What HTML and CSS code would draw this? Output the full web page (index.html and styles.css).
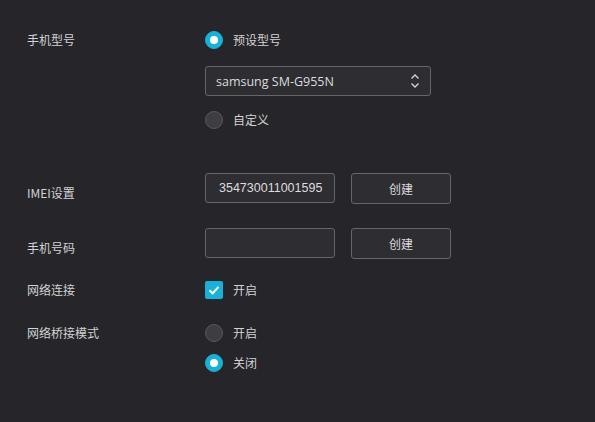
FILE: index.html
```html
<!DOCTYPE html>
<html lang="zh-CN">
<head>
<meta charset="utf-8">
<title>设置</title>
<link rel="stylesheet" href="styles.css">
</head>
<body>
<div class="page">
  <div class="row row-model">
    <div class="label">手机型号</div>
    <div class="field stack">
      <div class="option">
        <span class="radio checked"></span><span class="opt-text">预设型号</span>
      </div>
      <div class="select">
        <span class="select-text">samsung SM-G955N</span>
        <svg class="select-arrows" width="10" height="16" viewBox="0 0 10 16">
          <path d="M1.5 5.5 L5 2 L8.5 5.5" fill="none" stroke="#d8d8da" stroke-width="1.3"/>
          <path d="M1.5 10.5 L5 14 L8.5 10.5" fill="none" stroke="#d8d8da" stroke-width="1.3"/>
        </svg>
      </div>
      <div class="option option-after-select">
        <span class="radio"></span><span class="opt-text">自定义</span>
      </div>
    </div>
  </div>

  <div class="row row-imei">
    <div class="label label-input">IMEI设置</div>
    <div class="field inline">
      <div class="input"><span class="input-text">354730011001595</span></div>
      <div class="button">创建</div>
    </div>
  </div>

  <div class="row row-phone">
    <div class="label label-input">手机号码</div>
    <div class="field inline">
      <div class="input"></div>
      <div class="button">创建</div>
    </div>
  </div>

  <div class="row row-network">
    <div class="label">网络连接</div>
    <div class="field">
      <div class="option">
        <span class="checkbox">
          <svg width="18" height="18" viewBox="0 0 18 18">
            <path d="M4.5 9.2 L7.7 12.2 L13.5 5.8" fill="none" stroke="#ffffff" stroke-width="2"/>
          </svg>
        </span><span class="opt-text">开启</span>
      </div>
    </div>
  </div>

  <div class="row row-bridge">
    <div class="label">网络桥接模式</div>
    <div class="field stack">
      <div class="option">
        <span class="radio"></span><span class="opt-text">开启</span>
      </div>
      <div class="option option-second">
        <span class="radio checked"></span><span class="opt-text">关闭</span>
      </div>
    </div>
  </div>
</div>
</body>
</html>
```

FILE: styles.css
```css
html, body {
  margin: 0;
  padding: 0;
  background: #262529;
}

body {
  width: 595px;
  height: 422px;
  overflow: hidden;
  font-family: "Noto Sans CJK SC", "Open Sans", sans-serif;
  font-size: 12px;
  color: #d2d2d4;
}

.page {
  padding: 30px 0 0 27px;
}

.row {
  display: grid;
  grid-template-columns: 178px 1fr;
}

.label {
  line-height: 20px;
  height: 20px;
  white-space: nowrap;
}

.label-input {
  padding-top: 10px;
}

.stack {
  display: flex;
  flex-direction: column;
}

.inline {
  display: flex;
  gap: 16px;
}

.option {
  display: flex;
  align-items: center;
  height: 20px;
}

.opt-text {
  margin-left: 10px;
  line-height: 20px;
}

.radio {
  box-sizing: border-box;
  width: 18px;
  height: 18px;
  border-radius: 50%;
  background: #3e3d42;
  border: 1px solid #58575c;
  position: relative;
  flex: none;
}

.radio.checked {
  background: #1ab1d8;
  border-color: #1ab1d8;
}

.radio.checked::after {
  content: "";
  position: absolute;
  left: 4px;
  top: 4px;
  width: 8px;
  height: 8px;
  border-radius: 50%;
  background: #ffffff;
}

.checkbox {
  width: 18px;
  height: 18px;
  border-radius: 2px;
  background: #1ab1d8;
  flex: none;
  display: block;
}

.checkbox svg {
  display: block;
}

.select {
  box-sizing: border-box;
  margin-top: 16px;
  width: 226px;
  height: 30px;
  border: 1px solid #66656a;
  border-radius: 3px;
  background: #2e2d32;
  display: flex;
  align-items: center;
  justify-content: space-between;
  padding: 0 10px 0 10px;
}

.select-text {
  font-family: "Open Sans", "Noto Sans CJK SC", sans-serif;
  font-size: 12.5px;
  color: #dcdcde;
}

.select-arrows {
  display: block;
}

.option-after-select {
  margin-top: 14px;
}

.row-imei {
  margin-top: 43px;
}

.row-phone {
  margin-top: 24px;
}

.row-network {
  margin-top: 21px;
}

.row-bridge {
  margin-top: 23px;
}

.option-second {
  margin-top: 10px;
}

.input {
  box-sizing: border-box;
  width: 130px;
  height: 30px;
  border: 1px solid #66656a;
  border-radius: 3px;
  background: #2e2d32;
  display: flex;
  align-items: center;
  padding-left: 13px;
}

.input-text {
  font-family: "Liberation Sans", "Noto Sans CJK SC", sans-serif;
  font-size: 12.5px;
  color: #dcdcde;
  white-space: nowrap;
}

.button {
  box-sizing: border-box;
  width: 100px;
  height: 31px;
  border: 1px solid #66656a;
  border-radius: 3px;
  background: #2e2d32;
  display: flex;
  align-items: center;
  justify-content: center;
  color: #dcdcde;
}
```
